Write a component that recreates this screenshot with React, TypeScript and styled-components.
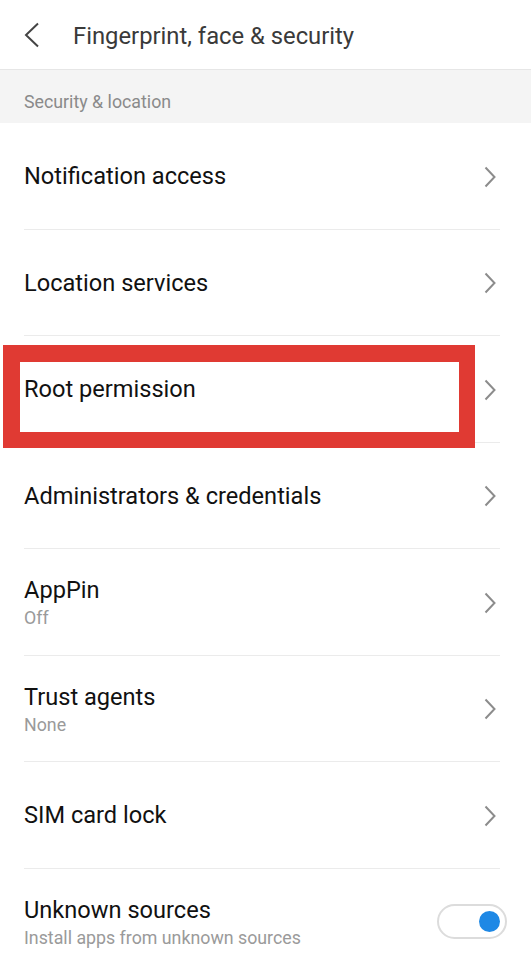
import React from 'react';
import styled, { createGlobalStyle } from 'styled-components';

const GlobalStyle = createGlobalStyle`
  html, body {
    margin: 0;
    padding: 0;
    background: #ffffff;
    font-family: Roboto, "Liberation Sans", sans-serif;
  }
`;

type Item = {
  title: string;
  subtitle?: string;
  toggle?: boolean;
  highlighted?: boolean;
};

const items: Item[] = [
  { title: 'Notification access' },
  { title: 'Location services' },
  { title: 'Root permission', highlighted: true },
  { title: 'Administrators & credentials' },
  { title: 'AppPin', subtitle: 'Off' },
  { title: 'Trust agents', subtitle: 'None' },
  { title: 'SIM card lock' },
  { title: 'Unknown sources', subtitle: 'Install apps from unknown sources', toggle: true },
];

//style
const Page = styled.div`
  width: 531px;
  height: 960px;
  overflow: hidden;
  background: #ffffff;
`;

const Header = styled.div`
  display: flex;
  align-items: center;
  height: 70px;
  box-sizing: border-box;
  border-bottom: 1px solid #e6e6e6;
  padding: 3px 0 0 24px;
`;

const BackButton = styled.div`
  display: flex;
  align-items: center;
  width: 49px;
  height: 30px;
  margin-top: -3px;
`;

const HeaderTitle = styled.h1`
  margin: 0;
  font-size: 23.8px;
  font-weight: 400;
  color: #3a3a3a;
`;

const SectionLabel = styled.div`
  display: flex;
  align-items: center;
  height: 53px;
  padding: 9px 0 0 24px;
  box-sizing: border-box;
  background: #f4f4f4;
  font-size: 17.8px;
  color: #8a8a8a;
`;

const List = styled.div`
  display: flex;
  flex-direction: column;
`;

const Row = styled.div`
  position: relative;
  display: flex;
  align-items: center;
  width: 476px;
  height: 106.5px;
  margin-left: 24px;
  padding-top: 2px;
  box-sizing: border-box;
  border-bottom: 1px solid #ebebeb;
`;

const Texts = styled.div`
  flex: 1;
  display: flex;
  flex-direction: column;
  gap: 3px;
`;

const Title = styled.div`
  font-size: 23.6px;
  line-height: 27px;
  color: #111111;
`;

const Subtitle = styled.div`
  font-size: 17.8px;
  line-height: 21px;
  color: #9a9a9a;
`;

const Chevron = styled.div`
  display: flex;
  align-items: center;
  justify-content: center;
  width: 12px;
  height: 22px;
  margin-right: 4px;
`;

const Toggle = styled.div<{ $on: boolean }>`
  position: absolute;
  right: -7px;
  top: 35px;
  width: 70px;
  height: 35px;
  box-sizing: border-box;
  border: 2px solid #dcdcdc;
  border-radius: 18px;
  background: #ffffff;

  &::after {
    content: '';
    position: absolute;
    top: 5px;
    left: ${(props) => (props.$on ? '40px' : '5px')};
    width: 21px;
    height: 21px;
    border-radius: 50%;
    background: #1e88e5;
  }
`;

const Highlight = styled.div`
  position: absolute;
  left: -21px;
  top: 9px;
  width: 472px;
  height: 103px;
  box-sizing: border-box;
  border: 17px solid #e03a33;
  border-right-width: 16px;
  border-bottom-width: 16px;
  pointer-events: none;
`;

function ChevronIcon() {
  return (
    <svg width="12" height="22" viewBox="0 0 12 22">
      <polyline points="1.5,1.5 10.5,11 1.5,20.5" fill="none" stroke="#8c8c8c" strokeWidth="2" />
    </svg>
  );
}

function App() {
  return (
    <Page>
      <GlobalStyle />
      <Header>
        <BackButton>
          <svg width="16" height="26" viewBox="0 0 16 26">
            <polyline points="14,1.5 2,13 14,24.5" fill="none" stroke="#444" strokeWidth="2" />
          </svg>
        </BackButton>
        <HeaderTitle>Fingerprint, face &amp; security</HeaderTitle>
      </Header>
      <SectionLabel>Security &amp; location</SectionLabel>
      <List>
        {items.map((item, i) => (
          <Row key={i}>
            <Texts>
              <Title>{item.title}</Title>
              {item.subtitle && <Subtitle>{item.subtitle}</Subtitle>}
            </Texts>
            {item.toggle ? (
              <Toggle $on={true} />
            ) : (
              <Chevron>
                <ChevronIcon />
              </Chevron>
            )}
            {item.highlighted && <Highlight />}
          </Row>
        ))}
      </List>
    </Page>
  );
}

export default App;
